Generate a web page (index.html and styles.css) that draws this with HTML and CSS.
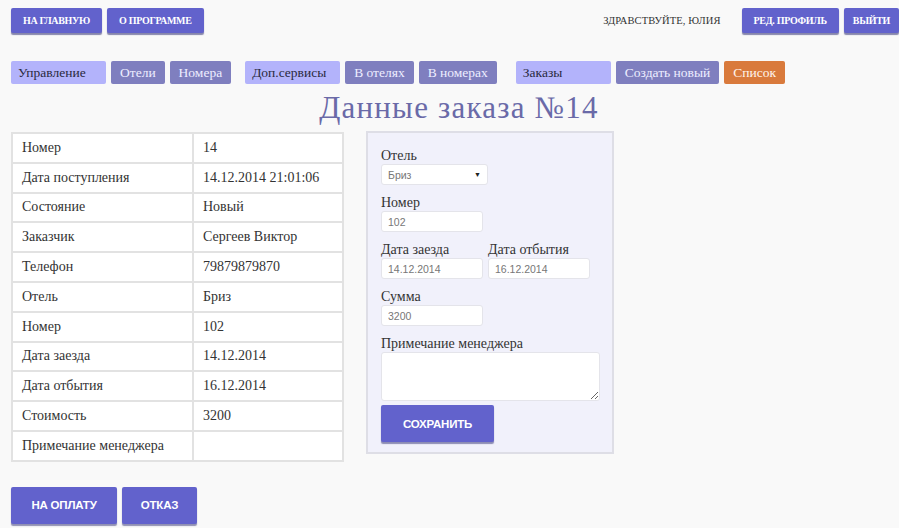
FILE: index.html
```html
<!DOCTYPE html>
<html>
<head>
<meta charset="utf-8">
<title>Данные заказа №14</title>
<link rel="stylesheet" href="styles.css">
</head>
<body>
<header class="topbar">
  <div class="topbar-left">
    <a class="btn-top" href="#">НА ГЛАВНУЮ</a>
    <a class="btn-top" href="#">О ПРОГРАММЕ</a>
  </div>
  <div class="topbar-right">
    <span class="greeting">ЗДРАВСТВУЙТЕ, ЮЛИЯ</span>
    <a class="btn-top" href="#">РЕД. ПРОФИЛЬ</a>
    <a class="btn-top" href="#">ВЫЙТИ</a>
  </div>
</header>

<nav class="menu">
  <div class="menu-group">
    <span class="menu-head">Управление</span>
    <a class="menu-item" href="#">Отели</a>
    <a class="menu-item" href="#">Номера</a>
  </div>
  <div class="menu-group">
    <span class="menu-head">Доп.сервисы</span>
    <a class="menu-item" href="#">В отелях</a>
    <a class="menu-item" href="#">В номерах</a>
  </div>
  <div class="menu-group">
    <span class="menu-head">Заказы</span>
    <a class="menu-item" href="#">Создать новый</a>
    <a class="menu-item active" href="#">Список</a>
  </div>
</nav>

<h1 class="title">Данные заказа №14</h1>

<main class="content">
  <table class="details">
    <tr><td>Номер</td><td>14</td></tr>
    <tr><td>Дата поступления</td><td>14.12.2014 21:01:06</td></tr>
    <tr><td>Состояние</td><td>Новый</td></tr>
    <tr><td>Заказчик</td><td>Сергеев Виктор</td></tr>
    <tr><td>Телефон</td><td>79879879870</td></tr>
    <tr><td>Отель</td><td>Бриз</td></tr>
    <tr><td>Номер</td><td>102</td></tr>
    <tr><td>Дата заезда</td><td>14.12.2014</td></tr>
    <tr><td>Дата отбытия</td><td>16.12.2014</td></tr>
    <tr><td>Стоимость</td><td>3200</td></tr>
    <tr><td>Примечание менеджера</td><td></td></tr>
  </table>

  <form class="edit-form">
    <div class="field">
      <label class="label">Отель</label>
      <div class="select">Бриз<span class="caret">▼</span></div>
    </div>
    <div class="field">
      <label class="label">Номер</label>
      <input class="input" type="text" value="102">
    </div>
    <div class="field-row">
      <div class="field">
        <label class="label">Дата заезда</label>
        <input class="input" type="text" value="14.12.2014">
      </div>
      <div class="field">
        <label class="label">Дата отбытия</label>
        <input class="input" type="text" value="16.12.2014">
      </div>
    </div>
    <div class="field">
      <label class="label">Сумма</label>
      <input class="input" type="text" value="3200">
    </div>
    <div class="field">
      <label class="label">Примечание менеджера</label>
      <textarea class="textarea"></textarea>
    </div>
    <button class="btn-big" type="button">СОХРАНИТЬ</button>
  </form>
</main>

<footer class="actions">
  <button class="btn-big" type="button">НА ОПЛАТУ</button>
  <button class="btn-big" type="button">ОТКАЗ</button>
</footer>
</body>
</html>
```

FILE: styles.css
```css
* { box-sizing: border-box; }

body {
  margin: 0;
  padding: 8px 0 0 11px;
  background: #f9f9f9;
  font-family: "Liberation Serif", "Noto Serif", "DejaVu Serif", Times, serif;
  color: #333;
  width: 899px;
  height: 528px;
  overflow: hidden;
}

a { text-decoration: none; }

/* top bar */
.topbar {
  display: flex;
  justify-content: space-between;
  align-items: center;
  height: 25px;
}
.topbar-left, .topbar-right {
  display: flex;
  align-items: center;
  gap: 5px;
}
.greeting {
  font-size: 10.5px;
  color: #333;
  margin-right: 16px;
  letter-spacing: 0.1px;
}
.btn-top {
  display: inline-flex;
  align-items: center;
  justify-content: center;
  height: 25px;
  padding: 0 12px;
  background: #6262cc;
  color: #fff;
  font-weight: bold;
  font-size: 10px;
  letter-spacing: -0.3px;
  border-radius: 2px;
  box-shadow: 0 2px 1px rgba(40, 40, 110, 0.55);
}
.topbar-right .btn-top:last-child { padding: 0 9px; }

/* secondary menu */
.menu {
  display: flex;
  gap: 14px;
  margin-top: 28px;
}
.menu-group {
  display: flex;
  gap: 5px;
}
.menu-group:last-child { margin-left: 5px; }
.menu-head, .menu-item {
  display: inline-flex;
  align-items: center;
  height: 23px;
  font-size: 13.5px;
  border-radius: 2px;
  padding: 0 9px;
}
.menu-head {
  width: 95px;
  padding: 0 7px;
  background: #b3b3fb;
  color: #2a2a40;
}
.menu-item {
  background: #7f7fbf;
  color: #eeeeff;
}
.menu-item.active {
  background: #d97a3c;
  color: #fff4ec;
}

/* heading */
.title {
  margin: 2px 0 0;
  height: 44px;
  line-height: 44px;
  text-align: center;
  font-weight: normal;
  font-size: 31px;
  letter-spacing: 1.2px;
  color: #6a6aa8;
  padding-left: 8px;
}

/* main area */
.content {
  display: flex;
  align-items: flex-start;
  gap: 22px;
  margin-top: 2px;
}

.details {
  border-collapse: collapse;
  background: #fff;
  width: 333px;
  font-size: 14px;
  color: #333;
}
.details td {
  border: 2px solid #e2e2e2;
  height: 29.8px;
  padding: 0 9px;
  vertical-align: middle;
}
.details td:first-child { width: 181px; }

/* edit form */
.edit-form {
  width: 248px;
  background: #f1f1fb;
  border: 2px solid #dedee6;
  padding: 14px 13px 10px;
  margin-top: -1px;
}
.field { margin-bottom: 9px; }
.field-row {
  display: flex;
  gap: 5px;
}
.label {
  display: block;
  font-size: 14px;
  line-height: 17px;
  color: #333;
}
.input, .select {
  display: block;
  height: 21px;
  width: 102px;
  background: #fff;
  border: 1px solid #e4e4ea;
  border-radius: 3px;
  padding: 0 6px;
  font-family: "Liberation Sans", Arial, sans-serif;
  font-size: 10.5px;
  color: #777;
}
.input:focus { outline: none; }
.select {
  width: 107px;
  display: flex;
  align-items: center;
  justify-content: space-between;
}
.caret {
  font-size: 7px;
  color: #222;
}
.textarea {
  display: block;
  width: 219px;
  height: 49px;
  background: #fff;
  border: 1px solid #e4e4ea;
  border-radius: 3px;
  resize: vertical;
  margin: 0;
}
.edit-form .field:nth-last-of-type(1) { margin-bottom: 4px; }

.btn-big {
  display: inline-flex;
  align-items: center;
  justify-content: center;
  height: 37px;
  padding: 0 17px;
  border: none;
  background: #6262cc;
  color: #fff;
  font-family: "Liberation Sans", Arial, sans-serif;
  font-weight: bold;
  font-size: 11.5px;
  letter-spacing: -0.2px;
  border-radius: 2px;
  box-shadow: 0 2px 1px rgba(40, 40, 110, 0.5);
}
.edit-form .btn-big { width: 113px; }

.actions {
  display: flex;
  gap: 5px;
  margin-top: 25px;
}
.actions .btn-big:first-child { width: 106px; }
.actions .btn-big:last-child { width: 75px; }
```
